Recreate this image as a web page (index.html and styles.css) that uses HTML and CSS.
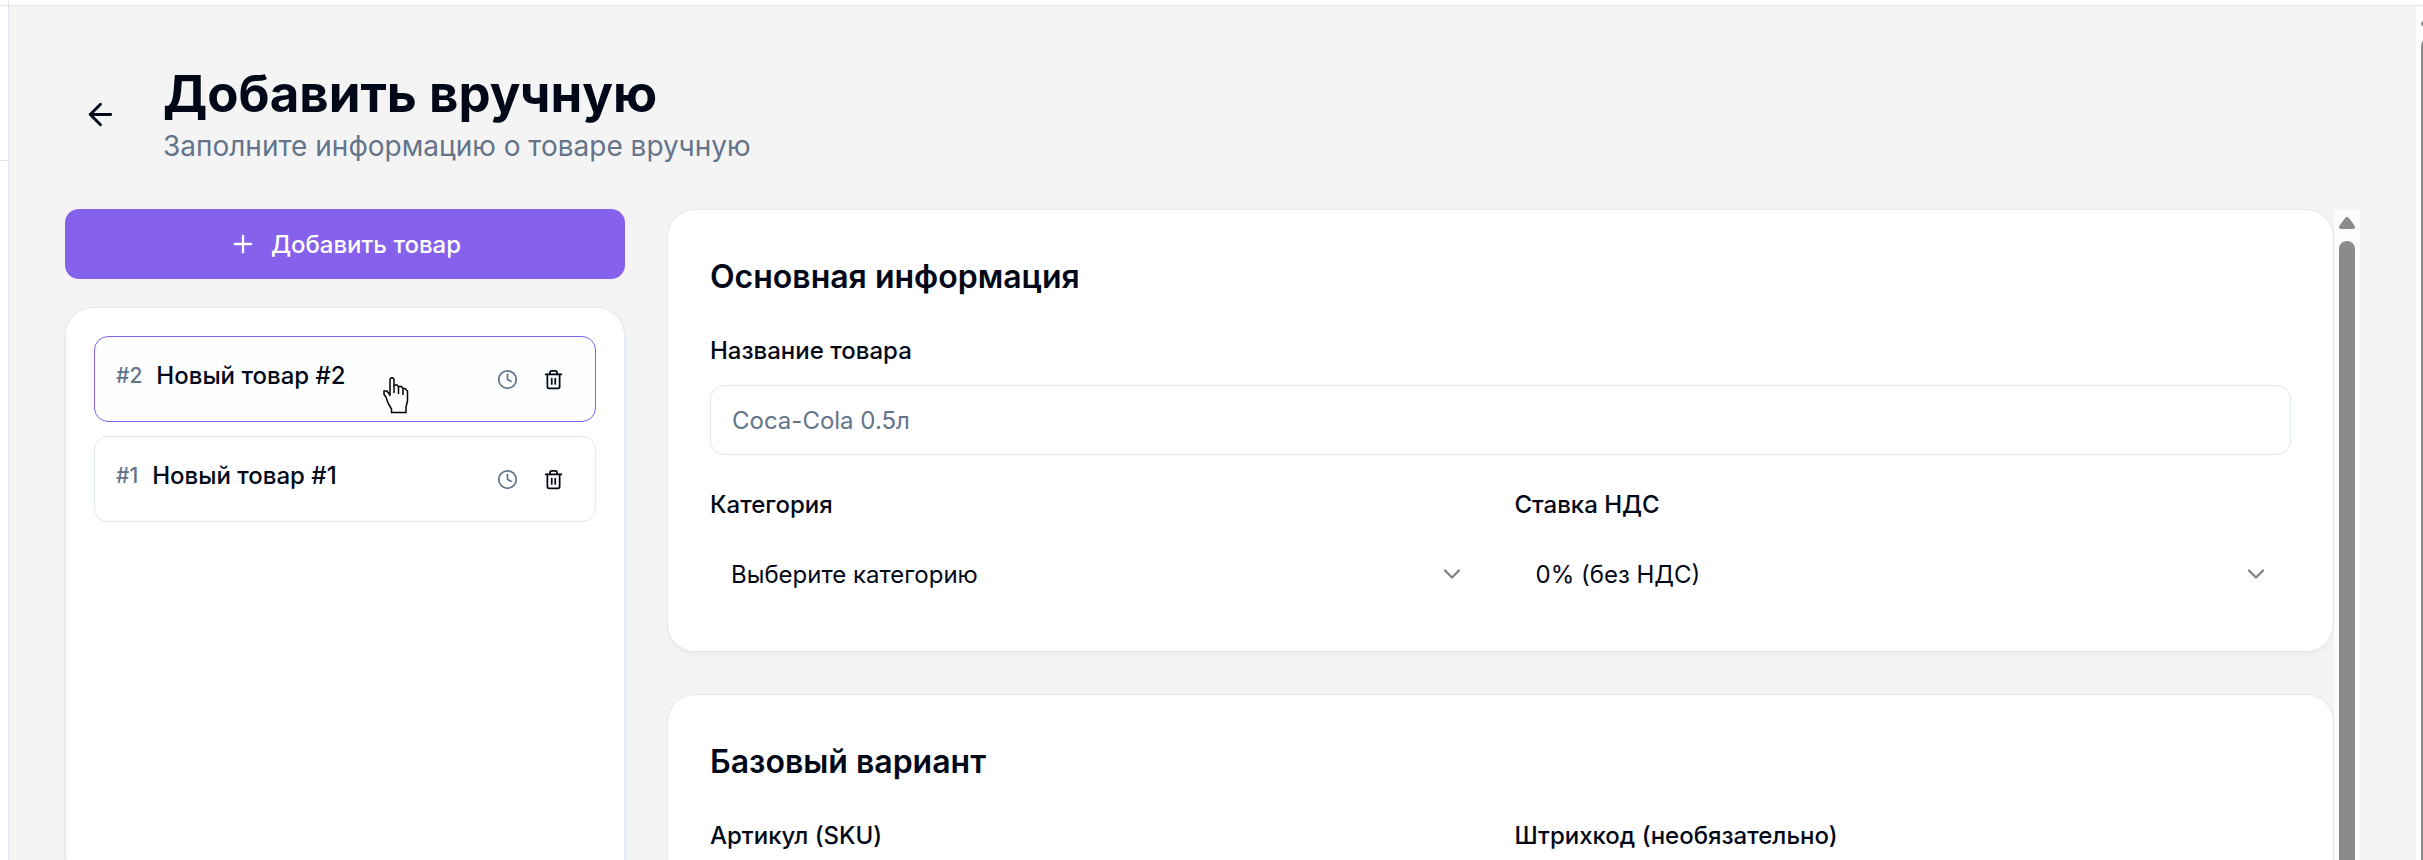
FILE: index.html
```html
<!DOCTYPE html>
<html lang="ru">
<head>
  <meta charset="utf-8">
  <meta name="viewport" content="width=device-width, initial-scale=1">
  <title>Добавить вручную</title>
  <link rel="stylesheet" href="styles.css">
</head>
<body>
  <svg class="sprite" aria-hidden="true">
    <symbol id="icon-clock" viewBox="0 0 24 24">
      <circle cx="12" cy="12" r="10"/>
      <path d="M12 6v6l4 2"/>
    </symbol>
    <symbol id="icon-trash" viewBox="0 0 24 24">
      <path d="M3 6h18"/>
      <path d="M19 6v14c0 1-1 2-2 2H7c-1 0-2-1-2-2V6"/>
      <path d="M8 6V4c0-1 1-2 2-2h4c1 0 2 1 2 2v2"/>
      <path d="M10 11v6M14 11v6"/>
    </symbol>
    <symbol id="icon-chevron" viewBox="0 0 24 24">
      <path d="m6 9 6 6 6-6"/>
    </symbol>
  </svg>

  <div class="app">
    <aside class="sidebar">
      <div class="sidebar-top"></div>
      <div class="sidebar-brand"></div>
    </aside>

    <div class="shell">
      <div class="topbar"></div>
      <div class="viewport">
        <main class="page">
          <header class="page-header">
            <button class="back" type="button" aria-label="Назад">
              <svg class="icon icon-lg" viewBox="0 0 24 24"><path d="m12 19-7-7 7-7"/><path d="M19 12H5"/></svg>
            </button>
            <div>
              <h1 class="title">Добавить вручную</h1>
              <p class="subtitle">Заполните информацию о товаре вручную</p>
            </div>
          </header>

          <div class="columns">
            <section class="products">
              <button class="add" type="button">
                <svg class="icon icon-md" viewBox="0 0 24 24"><path d="M5 12h14"/><path d="M12 5v14"/></svg>
                Добавить товар
              </button>
              <ul class="card list">
                <li class="item item-active">
                  <div class="item-label"><span class="num">#2</span><span class="name">Новый товар #2</span></div>
                  <div class="item-actions">
                    <svg class="icon icon-sm muted"><use href="#icon-clock"/></svg>
                    <button class="delete" type="button" aria-label="Удалить товар #2"><svg class="icon icon-sm"><use href="#icon-trash"/></svg></button>
                  </div>
                  <svg class="pointer" viewBox="0 0 26 38" aria-hidden="true">
                    <path d="M7 19V2L8.500 .800H9.500L11 2V8H14L15.500 9.500H18.500L20 11.500H22L24.500 14V24L23 30V35.500H8.500V32L5 26 3 20 1 17.500V14H4L7 18"/>
                    <path d="M11 8v8M15.500 9.500V17M20 11.500V18"/>
                  </svg>
                </li>
                <li class="item">
                  <div class="item-label"><span class="num">#1</span><span class="name">Новый товар #1</span></div>
                  <div class="item-actions">
                    <svg class="icon icon-sm muted"><use href="#icon-clock"/></svg>
                    <button class="delete" type="button" aria-label="Удалить товар #1"><svg class="icon icon-sm"><use href="#icon-trash"/></svg></button>
                  </div>
                </li>
              </ul>
            </section>

            <div class="editor">
              <form class="forms">
                <section class="card panel">
                  <h2 class="panel-title">Основная информация</h2>
                  <div class="fields">
                    <div class="field field-wide">
                      <label for="name">Название товара</label>
                      <input class="control input" id="name" type="text" placeholder="Coca-Cola 0.5л">
                    </div>
                    <div class="field">
                      <label for="category">Категория</label>
                      <div class="select-wrap">
                        <select class="control select" id="category"><option>Выберите категорию</option></select>
                        <svg class="icon icon-md chevron"><use href="#icon-chevron"/></svg>
                      </div>
                    </div>
                    <div class="field">
                      <label for="vat">Ставка НДС</label>
                      <div class="select-wrap">
                        <select class="control select" id="vat"><option>0% (без НДС)</option></select>
                        <svg class="icon icon-md chevron"><use href="#icon-chevron"/></svg>
                      </div>
                    </div>
                  </div>
                </section>

                <section class="card panel">
                  <h2 class="panel-title">Базовый вариант</h2>
                  <div class="fields">
                    <div class="field">
                      <label for="sku">Артикул (SKU)</label>
                      <input class="control input" id="sku" type="text">
                    </div>
                    <div class="field">
                      <label for="barcode">Штрихкод (необязательно)</label>
                      <input class="control input" id="barcode" type="text">
                    </div>
                  </div>
                </section>
              </form>
              <div class="scrollbar" aria-hidden="true">
                <svg class="scroll-arrow" viewBox="0 0 16 12"><path d="M8 2 14 10H2Z"/></svg>
                <div class="scroll-thumb"></div>
              </div>
            </div>
          </div>
        </main>
        <div class="scrollbar scrollbar-page" aria-hidden="true">
          <svg class="scroll-arrow" viewBox="0 0 16 12"><path d="M8 2 14 10H2Z"/></svg>
          <div class="scroll-thumb"></div>
        </div>
      </div>
    </div>
  </div>
</body>
</html>
```

FILE: styles.css
```css
:root {
  --ink: #020817;
  --muted: #64748b;
  --line: #e2e8f0;
  --accent: #8661ec;
  --surface: #ffffff;
  --canvas: #f4f4f4;
}

*,
*::before,
*::after {
  box-sizing: border-box;
}

body {
  margin: 0;
  font-family: Inter, "Liberation Sans", sans-serif;
  font-size: 24px;
  line-height: 35px;
  color: var(--ink);
  background: var(--surface);
}

h1,
h2,
p,
ul {
  margin: 0;
  padding: 0;
}

button,
input,
select {
  font: inherit;
  color: inherit;
}

.sprite {
  display: none;
}

.icon {
  flex: none;
  fill: none;
  stroke: currentColor;
  stroke-width: 2;
  stroke-linecap: round;
  stroke-linejoin: round;
}

.icon-sm {
  width: 21px;
  height: 21px;
}

.icon-md {
  width: 28px;
  height: 28px;
}

.icon-lg {
  width: 35px;
  height: 35px;
}

.muted {
  color: var(--muted);
}

/* Application frame */
.app {
  display: flex;
  height: 100vh;
  overflow: hidden;
}

.sidebar {
  flex: none;
  width: 9px;
  border-right: 1px solid var(--line);
}

.sidebar-top,
.topbar {
  flex: none;
  height: 6px;
  border-bottom: 1px solid var(--line);
}

.sidebar-brand {
  height: 155px;
  border-bottom: 1px solid var(--line);
}

.shell {
  flex: 1;
  min-width: 0;
  display: flex;
  flex-direction: column;
}

.viewport {
  flex: 1;
  min-height: 0;
  display: flex;
  background: var(--canvas);
}

.page {
  flex: 1;
  min-width: 0;
  display: flex;
  flex-direction: column;
  gap: 42px;
  padding: 56px 56px 0;
}

.page-header {
  display: flex;
  align-items: center;
  gap: 28px;
}

.back {
  display: grid;
  place-items: center;
  width: 70px;
  height: 70px;
  padding: 0;
  border: 0;
  border-radius: 14px;
  background: transparent;
}

.title {
  font-size: 51px;
  font-weight: 700;
  line-height: 63px;
}

.subtitle {
  font-size: 28px;
  line-height: 42px;
  color: var(--muted);
}

.columns {
  flex: 1;
  min-height: 0;
  display: grid;
  grid-template-columns: 560px minmax(0, 1fr);
  gap: 42px;
}

/* Product list */
.products {
  display: flex;
  flex-direction: column;
  gap: 28px;
  min-height: 0;
}

.add {
  flex: none;
  display: flex;
  align-items: center;
  justify-content: center;
  gap: 14px;
  height: 70px;
  padding: 0 28px;
  border: 0;
  border-radius: 14px;
  background: var(--accent);
  color: #ffffff;
  font-weight: 500;
}

.card {
  border: 1px solid var(--line);
  border-radius: 28px;
  background: var(--surface);
  box-shadow: 0 2px 4px rgb(0 0 0 / 5%);
}

.list {
  flex: 1;
  display: flex;
  flex-direction: column;
  gap: 14px;
  padding: 28px;
  border-bottom: 0;
  border-radius: 28px 28px 0 0;
  list-style: none;
}

.item {
  position: relative;
  display: flex;
  align-items: flex-start;
  justify-content: space-between;
  padding: 21px;
  border: 1px solid var(--line);
  border-radius: 14px;
}

.item-active {
  border-color: var(--accent);
  background: #fdfefe;
}

.item-label,
.item-actions {
  display: flex;
  align-items: center;
}

.item-label {
  gap: 14px;
}

.num {
  font-size: 21px;
  font-weight: 500;
  color: var(--muted);
}

.name {
  font-weight: 500;
}

.item-actions {
  gap: 14px;
}

.delete {
  display: grid;
  place-items: center;
  width: 42px;
  height: 42px;
  padding: 0;
  border: 0;
  background: transparent;
}

.pointer {
  position: absolute;
  top: 40px;
  left: 288px;
  width: 26px;
  height: 38px;
  fill: #ffffff;
  stroke: #000000;
  stroke-width: 1.5;
}

/* Editor */
.editor {
  display: flex;
  min-height: 0;
  overflow: hidden;
}

.forms {
  flex: 1;
  min-width: 0;
  display: flex;
  flex-direction: column;
  gap: 42px;
}

.panel {
  flex: none;
  display: flex;
  flex-direction: column;
  gap: 28px;
  padding: 42px;
}

.panel-title {
  font-size: 32px;
  font-weight: 600;
  line-height: 49px;
}

.fields {
  display: grid;
  grid-template-columns: repeat(2, minmax(0, 1fr));
  gap: 28px;
}

.field {
  display: flex;
  flex-direction: column;
  gap: 12px;
}

.field-wide {
  grid-column: 1 / -1;
}

.field label {
  font-weight: 500;
  line-height: 44px;
}

.control {
  width: 100%;
  height: 70px;
  padding: 0 21px;
  border: 1px solid var(--line);
  border-radius: 14px;
  background: var(--surface);
}

.input::placeholder {
  color: var(--muted);
  opacity: 1;
}

.select-wrap {
  position: relative;
}

.select {
  display: block;
  appearance: none;
  border: 0;
}

.chevron {
  position: absolute;
  top: 21px;
  right: 21px;
  opacity: 0.5;
  pointer-events: none;
}

/* Scrollbars */
.scrollbar {
  flex: none;
  display: flex;
  flex-direction: column;
  align-items: center;
  gap: 12px;
  width: 26px;
  padding-top: 8px;
  background: #fcfcfc;
}

.scrollbar-page {
  margin-right: -19px;
}

.scroll-arrow {
  width: 16px;
  height: 12px;
  fill: #8b8b8b;
  stroke: #8b8b8b;
  stroke-width: 4;
  stroke-linejoin: round;
}

.scroll-thumb {
  flex: 1;
  width: 16px;
  border-radius: 8px 8px 0 0;
  background: #8b8b8b;
}
```
